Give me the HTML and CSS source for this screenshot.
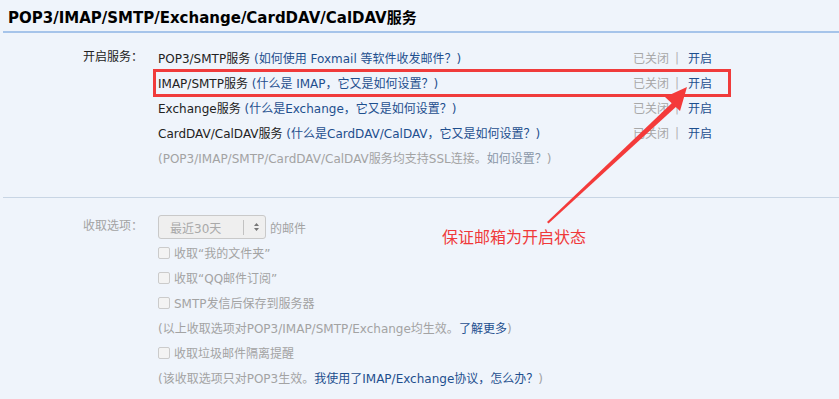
FILE: index.html
```html
<!DOCTYPE html>
<html lang="zh-CN">
<head>
<meta charset="utf-8">
<title>POP3/IMAP/SMTP/Exchange/CardDAV/CalDAV服务</title>
<link rel="stylesheet" href="styles.css">
</head>
<body>
<div class="page">
  <h2 class="title">POP3/IMAP/SMTP/Exchange/CardDAV/CalDAV服务</h2>

  <div class="section section-services">
    <div class="label">开启服务：</div>
    <div class="rows">
      <div class="row">
        <div class="main">POP3/SMTP服务 <a class="link">(如何使用 Foxmail 等软件收发邮件？)</a></div>
        <div class="status"><span class="off">已关闭</span><span class="bar">|</span><a class="on">开启</a></div>
      </div>
      <div class="row">
        <div class="main">IMAP/SMTP服务 <a class="link">(什么是 IMAP，它又是如何设置？)</a></div>
        <div class="status"><span class="off">已关闭</span><span class="bar">|</span><a class="on">开启</a></div>
      </div>
      <div class="row">
        <div class="main">Exchange服务 <a class="link">(什么是Exchange，它又是如何设置？)</a></div>
        <div class="status"><span class="off">已关闭</span><span class="bar">|</span><a class="on">开启</a></div>
      </div>
      <div class="row">
        <div class="main">CardDAV/CalDAV服务 <a class="link">(什么是CardDAV/CalDAV，它又是如何设置？)</a></div>
        <div class="status"><span class="off">已关闭</span><span class="bar">|</span><a class="on">开启</a></div>
      </div>
      <div class="row">
        <div class="main muted">(POP3/IMAP/SMTP/CardDAV/CalDAV服务均支持SSL连接。<a class="link-soft">如何设置？</a>)</div>
      </div>
    </div>
  </div>

  <div class="section section-options">
    <div class="label muted">收取选项：</div>
    <div class="rows">
      <div class="row row-select">
        <div class="select">
          <span class="select-text">最近30天</span>
          <span class="select-div"></span>
          <svg class="select-arrow" width="7" height="10" viewBox="0 0 7 10"><path d="M3.5 1 L6 4 H1 Z M3.5 9 L6 6 H1 Z" fill="#777"/></svg>
        </div>
        <span class="muted after-select">的邮件</span>
      </div>
      <div class="row"><span class="check"></span><span class="muted">收取“我的文件夹”</span></div>
      <div class="row"><span class="check"></span><span class="muted">收取“QQ邮件订阅”</span></div>
      <div class="row"><span class="check"></span><span class="muted">SMTP发信后保存到服务器</span></div>
      <div class="row"><span class="muted">(以上收取选项对POP3/IMAP/SMTP/Exchange均生效。<a class="link">了解更多</a>)</span></div>
      <div class="row"><span class="check"></span><span class="muted">收取垃圾邮件隔离提醒</span></div>
      <div class="row"><span class="muted">(该收取选项只对POP3生效。<a class="link">我使用了IMAP/Exchange协议，怎么办？</a>)</span></div>
    </div>
  </div>

  <div class="highlight"></div>
  <div class="note">保证邮箱为开启状态</div>
  <svg class="arrow" width="839" height="399" viewBox="0 0 839 399">
    <path d="M547 222 L674 101 L678 105 L548.5 223.5 Z" fill="#f43a3a"/>
    <path d="M687 87 L665 97 L680 111 Z" fill="#f43a3a"/>
  </svg>
</div>
</body>
</html>
```
FILE: styles.css
```css
html, body {
  margin: 0;
  padding: 0;
  background: #eff4fb;
}
.page {
  position: relative;
  width: 839px;
  height: 399px;
  overflow: hidden;
  font-family: "DejaVu Sans", "Noto Sans CJK SC", sans-serif;
  font-size: 12px;
  color: #222;
}
.title {
  margin: 0 0 0 3px;
  padding: 9px 0 0 5px;
  height: 22px;
  font-family: "DejaVu Sans", "Noto Sans CJK SC", sans-serif;
  font-size: 15px;
  font-weight: bold;
  line-height: 18px;
  color: #000;
  border-bottom: 2px solid #a6c4ea;
}
.section {
  display: flex;
  margin-left: 3px;
}
.section-services {
  padding-top: 12px;
  height: 152px;
  border-bottom: 1px solid #c8d5e4;
}
.section-options {
  padding-top: 16px;
}
.label {
  width: 75px;
  padding-left: 80px;
  height: 25px;
  line-height: 25px;
  color: #222;
}
.rows {
  flex: 1;
  display: flex;
  flex-direction: column;
}
.row {
  display: flex;
  align-items: center;
  height: 25px;
  white-space: nowrap;
}
.main {
  flex: 1;
}
.link {
  color: #1e4f8e;
}
.link-soft {
  color: #8a97a8;
}
.muted {
  color: #a3a3a3;
}
.status {
  display: flex;
  align-items: center;
  margin-right: 127px;
}
.off {
  color: #a8a8a8;
}
.bar {
  color: #b5b5b5;
  margin: 0 9px 0 6px;
}
.on {
  color: #1e4f8e;
}
.row-select {
  height: 26px;
}
.select {
  position: relative;
  display: flex;
  align-items: center;
  box-sizing: border-box;
  width: 108px;
  height: 24px;
  border: 1px solid #c9c9c9;
  border-radius: 3px;
  background: #efefef;
}
.select-text {
  color: #a9a9a9;
  padding-left: 11px;
  width: 73px;
}
.select-div {
  width: 1px;
  height: 15px;
  background: #c2c2c2;
}
.select-arrow {
  margin-left: 9px;
}
.after-select {
  margin-left: 4px;
}
.check {
  box-sizing: border-box;
  width: 12px;
  height: 12px;
  border: 1px solid #cbcbcb;
  border-radius: 2px;
  background: #f3f3f3;
  margin-right: 4px;
}
.highlight {
  position: absolute;
  left: 153px;
  top: 69px;
  width: 578px;
  height: 28px;
  box-sizing: border-box;
  border: 3px solid #f03b3b;
}
.note {
  position: absolute;
  left: 442px;
  top: 225px;
  font-family: "Noto Sans CJK SC", sans-serif;
  font-size: 16px;
  line-height: 22px;
  color: #f0393a;
}
.arrow {
  position: absolute;
  left: 0;
  top: 0;
  pointer-events: none;
}
```
